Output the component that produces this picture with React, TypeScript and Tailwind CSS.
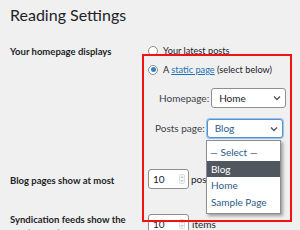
import React from "react";

function Radio({ checked }: { checked?: boolean }) {
  return (
    <span className="flex h-[10px] w-[10px] shrink-0 items-center justify-center rounded-full border border-[#8c8f94] bg-white">
      {checked && <span className="h-[5px] w-[5px] rounded-full bg-[#3582c4]" />}
    </span>
  );
}

function Chevron() {
  return (
    <svg width="8" height="6" viewBox="0 0 8 6" className="shrink-0">
      <path d="M1 1.5 L4 4.5 L7 1.5" fill="none" stroke="#50575e" strokeWidth="1.4" />
    </svg>
  );
}

function Spinner() {
  return (
    <svg width="6" height="10" viewBox="0 0 6 10" className="shrink-0">
      <rect x="0.5" y="0.5" width="5" height="9" rx="1" fill="#f6f7f7" stroke="#dcdcde" />
      <path d="M1.8 4 L3 2.6 L4.2 4" fill="none" stroke="#a7aaad" strokeWidth="0.8" />
      <path d="M1.8 6 L3 7.4 L4.2 6" fill="none" stroke="#a7aaad" strokeWidth="0.8" />
    </svg>
  );
}

function NumberInput() {
  return (
    <div className="flex h-[20px] w-[41px] shrink-0 items-center justify-between rounded-[3px] border border-[#8c8f94] bg-white pl-[4px] pr-[3px]">
      <span>10</span>
      <Spinner />
    </div>
  );
}

export default function App() {
  return (
    <div className="relative h-[230px] w-[300px] overflow-hidden bg-[#f0f0f1] font-['Lato',sans-serif] text-[10px] leading-[13px] text-[#1d2327]">
      <h1 className="pl-[10px] pt-[4px] text-[16px] leading-[22px] font-normal">Reading Settings</h1>

      {/* Homepage displays */}
      <div className="mt-[18px] flex">
        <div className="w-[148px] shrink-0 pl-[10px] pt-[1px] text-[9.5px] font-bold">Your homepage displays</div>
        <div className="flex flex-col">
          <div className="flex h-[13px] items-center gap-[5px] text-[9.2px]">
            <Radio />
            <span>Your latest posts</span>
          </div>
          <div className="mt-[6px] flex h-[13px] items-center gap-[5px] text-[9.2px]">
            <Radio checked />
            <span>
              A <span className="text-[#2271b1] underline">static page</span> (select below)
            </span>
          </div>
          <div className="mt-[12px] ml-[11px] flex items-center gap-[2px]">
            <span className="text-[#3c434a]">Homepage:</span>
            <div className="flex h-[20px] w-[75px] items-center justify-between rounded-[3px] border border-[#8c8f94] bg-white pl-[7px] pr-[4px]">
              <span>Home</span>
              <Chevron />
            </div>
          </div>
          <div className="mt-[11px] ml-[7px] flex items-center gap-[2px]">
            <span className="text-[#3c434a]">Posts page:</span>
            <div className="flex h-[19px] w-[76px] items-center justify-between rounded-[3px] border border-[#4f94d4] bg-white pl-[7px] pr-[4px] shadow-[0_0_0_1px_#9ec2e6]">
              <span className="text-[#2c5b85]">Blog</span>
              <Chevron />
            </div>
          </div>
        </div>
      </div>

      {/* Blog pages */}
      <div className="mt-[31px] flex items-center">
        <div className="w-[148px] shrink-0 pl-[10px] pt-[3px] text-[9.5px] font-bold">Blog pages show at most</div>
        <div className="flex items-center gap-[2px]">
          <NumberInput />
          <span>posts</span>
        </div>
      </div>

      {/* Syndication */}
      <div className="mt-[15px] flex items-start">
        <div className="w-[148px] shrink-0 pl-[10px] pt-[9px] text-[9.5px] font-bold">
          Syndication feeds show the
          <br />
          most recent
        </div>
        <div className="mt-[10px] flex items-center gap-[3px]">
          <NumberInput />
          <span>items</span>
        </div>
      </div>

      {/* Dropdown list */}
      <div className="absolute left-[206px] top-[140px] w-[75px] border border-[#8c8f94] bg-white pt-[3px] pb-[2px] shadow-[2px_2px_3px_rgba(0,0,0,0.35)]">
        <div className="flex h-[17px] items-center pl-[3px] text-[#2c5b85]">— Select —</div>
        <div className="flex h-[16px] items-center bg-[#50575e] pl-[4px] text-white">Blog</div>
        <div className="flex h-[17px] items-center pl-[4px] text-[#2c5b85]">Home</div>
        <div className="flex h-[17px] items-center pl-[4px] text-[#2c5b85]">Sample Page</div>
      </div>

      {/* Highlight box */}
      <div className="pointer-events-none absolute left-[142px] top-[54px] h-[168px] w-[150px] border-2 border-[#f21212]" />
    </div>
  );
}
